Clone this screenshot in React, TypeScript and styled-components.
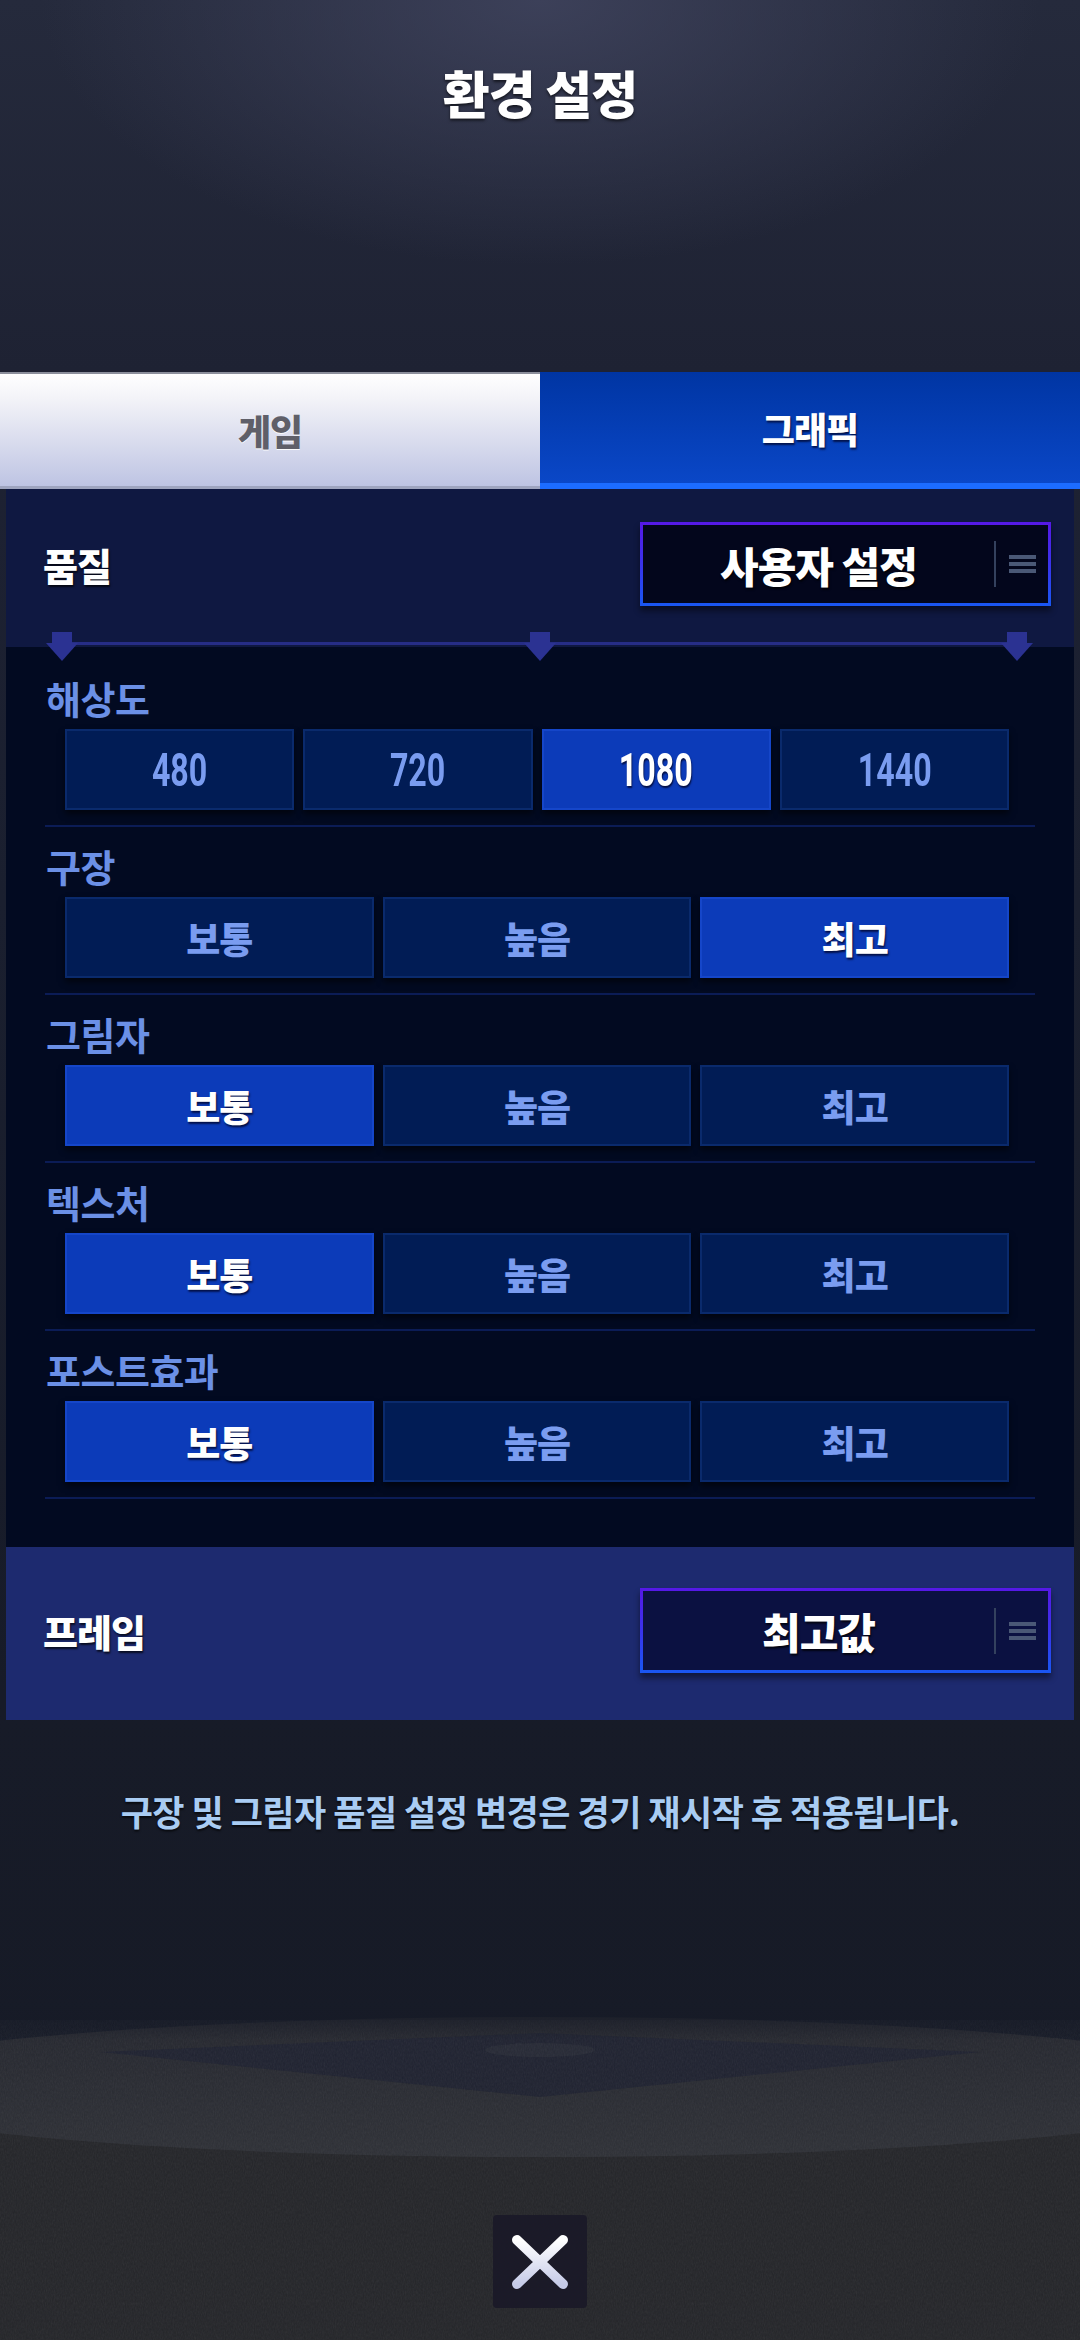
import React from 'react';
import styled, { createGlobalStyle, css } from 'styled-components';

const GlobalStyle = createGlobalStyle`
  html, body { margin: 0; padding: 0; background: #161a25; }
  body { font-family: "Noto Sans CJK KR", "Noto Sans", sans-serif; }
  * { box-sizing: border-box; }
`;

const Page = styled.div`
  width: 1080px;
  min-height: 2340px;
  display: flex;
  flex-direction: column;
  overflow: hidden;
  background:
    radial-gradient(ellipse 640px 340px at 50% 0, rgba(64, 68, 94, 0.85), rgba(64, 68, 94, 0) 78%),
    linear-gradient(180deg, #252a3c 0, #1e2233 370px, #1a1f2f 900px, #171b28 1700px, #161a25 2340px);
`;

const Header = styled.header`
  height: 372px;
  padding-top: 62px;
  text-align: center;
`;

const Title = styled.h1`
  margin: 0;
  font-size: 51px;
  line-height: 60px;
  font-weight: 900;
  color: #ffffff;
  letter-spacing: -1px;
  text-shadow: 0 2px 3px rgba(0, 0, 0, 0.6);
`;

const Tabs = styled.nav`
  display: grid;
  grid-template-columns: 1fr 1fr;
  height: 117px;
`;

const Tab = styled.div<{ $active?: boolean }>`
  display: flex;
  align-items: center;
  justify-content: center;
  font-size: 36px;
  font-weight: 900;
  letter-spacing: -1px;
  ${(p) =>
    p.$active
      ? css`
          background: linear-gradient(180deg, #0035a3 0%, #0a47c7 100%);
          border-bottom: 6px solid #1c6cff;
          color: #ffffff;
          text-shadow: 1px 2px 2px rgba(0, 0, 30, 0.7);
        `
      : css`
          background: linear-gradient(180deg, #ffffff 0%, #f3f3f8 22%, #bec4e3 100%);
          border-top: 2px solid #8c8f9c;
          border-bottom: 3px solid #9ea4bf;
          color: #5f5f69;
          text-shadow: 0 1px 0 rgba(255, 255, 255, 0.9);
        `}
`;

const Panel = styled.section`
  margin: 0 6px;
  display: flex;
  flex-direction: column;
`;

const QualitySection = styled.div`
  background: #0f1841;
  padding-top: 33px;
  display: flex;
  flex-direction: column;
`;

const HeadRow = styled.div`
  display: flex;
  align-items: center;
  justify-content: space-between;
  padding: 0 23px 0 37px;
`;

const SectionLabel = styled.span`
  font-size: 38px;
  font-weight: 900;
  color: #ffffff;
  letter-spacing: -1px;
  text-shadow: 1px 2px 2px rgba(0, 0, 0, 0.7);
`;

const Dropdown = styled.div<{ $bg: string; $h: number }>`
  width: 411px;
  height: ${(p) => p.$h}px;
  border: 3px solid;
  border-image: linear-gradient(180deg, #5519e6 0%, #3a33ec 50%, #1a56f2 100%) 1;
  background: ${(p) => p.$bg};
  box-shadow: 0 5px 6px rgba(0, 0, 0, 0.45);
  display: grid;
  grid-template-columns: 1fr 2px 52px;
  align-items: center;
`;

const DropdownValue = styled.span`
  text-align: center;
  font-size: 42px;
  font-weight: 900;
  color: #ffffff;
  letter-spacing: -1px;
  text-shadow: 1px 2px 2px rgba(0, 0, 0, 0.75);
`;

const DropdownDivider = styled.span`
  width: 2px;
  height: 46px;
  background: #34415e;
`;

const MenuIcon = styled.svg`
  justify-self: center;
  display: block;
`;

const Rail = styled.svg`
  display: block;
  margin-top: 26px;
  margin-bottom: -14px;
  position: relative;
  z-index: 1;
`;

const DarkSection = styled.div`
  background: #020a21;
  padding: 12px 0 48px;
  display: flex;
  flex-direction: column;
`;

const SettingRow = styled.div`
  margin: 0 39px;
  padding: 17px 0 15px;
  border-bottom: 2px solid #0b1c56;
`;

const RowLabel = styled.div`
  font-size: 38px;
  line-height: 44px;
  font-weight: 700;
  color: #6b90e6;
  padding-left: 1px;
  letter-spacing: -0.5px;
`;

const Options = styled.div<{ $n: number }>`
  display: grid;
  grid-template-columns: repeat(${(p) => p.$n}, 1fr);
  gap: 9px;
  margin-top: 9px;
  padding: 0 26px 0 20px;
`;

const OptionButton = styled.div<{ $active?: boolean }>`
  height: 81px;
  display: flex;
  align-items: center;
  justify-content: center;
  font-size: 37px;
  font-weight: 900;
  letter-spacing: -1px;
  box-shadow: 0 4px 6px rgba(0, 0, 0, 0.55);
  ${(p) =>
    p.$active
      ? css`
          background: #0c3bb9;
          border: 2px solid #1546c9;
          color: #ffffff;
          text-shadow: 1px 2px 2px rgba(0, 0, 30, 0.75);
        `
      : css`
          background: #011c55;
          border: 2px solid #0a2a6c;
          color: #7a9cf0;
        `}
`;

const Digits = styled.span`
  display: inline-block;
  font-family: Roboto, "Liberation Sans", sans-serif;
  font-size: 46px;
  font-weight: 700;
  letter-spacing: 0;
  transform: scaleX(0.7);
`;

const FrameSection = styled.div`
  background: #1d2a6f;
  padding: 41px 0 47px;
`;

const Footnote = styled.p`
  margin: 71px 0 0;
  text-align: center;
  font-size: 35px;
  line-height: 40px;
  font-weight: 700;
  color: #a9ccf3;
  letter-spacing: -0.5px;
  text-shadow: 0 2px 2px rgba(0, 0, 0, 0.6);
`;

const Field = styled.div`
  margin-top: 169px;
  height: 340px;
  display: grid;
`;

const FieldArt = styled.svg`
  grid-area: 1 / 1;
  display: block;
`;

const CloseButton = styled.button`
  grid-area: 1 / 1;
  align-self: end;
  justify-self: center;
  margin-bottom: 32px;
  width: 94px;
  height: 93px;
  border: none;
  border-radius: 4px;
  background: #1b1a28;
  display: flex;
  align-items: center;
  justify-content: center;
  padding: 0;
  cursor: pointer;
`;

type Row = { label: string; options: string[]; active: number; digits?: boolean };

const rows: Row[] = [
  { label: '해상도', options: ['480', '720', '1080', '1440'], active: 2, digits: true },
  { label: '구장', options: ['보통', '높음', '최고'], active: 2 },
  { label: '그림자', options: ['보통', '높음', '최고'], active: 0 },
  { label: '텍스처', options: ['보통', '높음', '최고'], active: 0 },
  { label: '포스트효과', options: ['보통', '높음', '최고'], active: 0 },
];

const Hamburger = () => (
  <MenuIcon width="27" height="18" viewBox="0 0 27 18">
    <rect x="0" y="0" width="27" height="4" fill="#4a5876" />
    <rect x="0" y="7" width="27" height="4" fill="#4a5876" />
    <rect x="0" y="14" width="27" height="4" fill="#4a5876" />
  </MenuIcon>
);

const Arrow = ({ cx }: { cx: number }) => (
  <g fill="#2b3292">
    <rect x={cx - 10} y={0} width={20} height={12} />
    <polygon points={`${cx - 16},11 ${cx + 16},11 ${cx},29`} />
  </g>
);

const App: React.FC = () => (
  <>
    <GlobalStyle />
    <Page>
      <Header>
        <Title>환경 설정</Title>
      </Header>
      <Tabs>
        <Tab>게임</Tab>
        <Tab $active>그래픽</Tab>
      </Tabs>
      <Panel>
        <QualitySection>
          <HeadRow>
            <SectionLabel>품질</SectionLabel>
            <Dropdown $bg="#03061c" $h={84}>
              <DropdownValue>사용자 설정</DropdownValue>
              <DropdownDivider />
              <Hamburger />
            </Dropdown>
          </HeadRow>
          <Rail width="1068" height="29" viewBox="0 0 1068 29">
            <rect x="56" y="10" width="955" height="3" fill="#262d86" />
            <Arrow cx={56} />
            <Arrow cx={534} />
            <Arrow cx={1011} />
          </Rail>
        </QualitySection>
        <DarkSection>
          {rows.map((r) => (
            <SettingRow key={r.label}>
              <RowLabel>{r.label}</RowLabel>
              <Options $n={r.options.length}>
                {r.options.map((o, i) => (
                  <OptionButton key={o} $active={i === r.active}>
                    {r.digits ? <Digits>{o}</Digits> : o}
                  </OptionButton>
                ))}
              </Options>
            </SettingRow>
          ))}
        </DarkSection>
        <FrameSection>
          <HeadRow>
            <SectionLabel>프레임</SectionLabel>
            <Dropdown $bg="#0b1141" $h={85}>
              <DropdownValue>최고값</DropdownValue>
              <DropdownDivider />
              <Hamburger />
            </Dropdown>
          </HeadRow>
        </FrameSection>
      </Panel>
      <Footnote>구장 및 그림자 품질 설정 변경은 경기 재시작 후 적용됩니다.</Footnote>
      <Field>
        <FieldArt width="1080" height="340" viewBox="0 0 1080 340">
          <defs>
            <linearGradient id="dirt" x1="0" y1="0" x2="0" y2="1">
              <stop offset="0" stopColor="#24262e" />
              <stop offset="1" stopColor="#2e3036" />
            </linearGradient>
            <linearGradient id="fade" x1="0" y1="0" x2="0" y2="1">
              <stop offset="0" stopColor="#171b27" stopOpacity="1" />
              <stop offset="1" stopColor="#171b27" stopOpacity="0" />
            </linearGradient>
            <filter id="noise" x="0" y="0" width="100%" height="100%">
              <feTurbulence type="fractalNoise" baseFrequency="0.9 0.35" numOctaves="2" seed="4" />
              <feColorMatrix type="saturate" values="0" />
            </filter>
          </defs>
          <rect x="0" y="95" width="1080" height="245" fill="#242529" />
          <ellipse cx="540" cy="87" rx="720" ry="70" fill="url(#dirt)" />
          <polygon points="100,52 540,33 980,52 540,97" fill="#1f2230" />
          <ellipse cx="540" cy="50" rx="55" ry="7" fill="#262935" />
          <rect x="0" y="20" width="1080" height="320" filter="url(#noise)" opacity="0.08" />
          <rect x="0" y="0" width="1080" height="40" fill="url(#fade)" />
        </FieldArt>
        <CloseButton aria-label="닫기">
          <svg width="60" height="56" viewBox="0 0 60 56">
            <defs>
              <linearGradient id="xg" x1="0" y1="0" x2="0" y2="1">
                <stop offset="0" stopColor="#ffffff" />
                <stop offset="1" stopColor="#c6cbe8" />
              </linearGradient>
            </defs>
            <path d="M7 6 L53 50 M53 6 L7 50" stroke="url(#xg)" strokeWidth="10" strokeLinecap="round" fill="none" />
          </svg>
        </CloseButton>
      </Field>
    </Page>
  </>
);

export default App;
